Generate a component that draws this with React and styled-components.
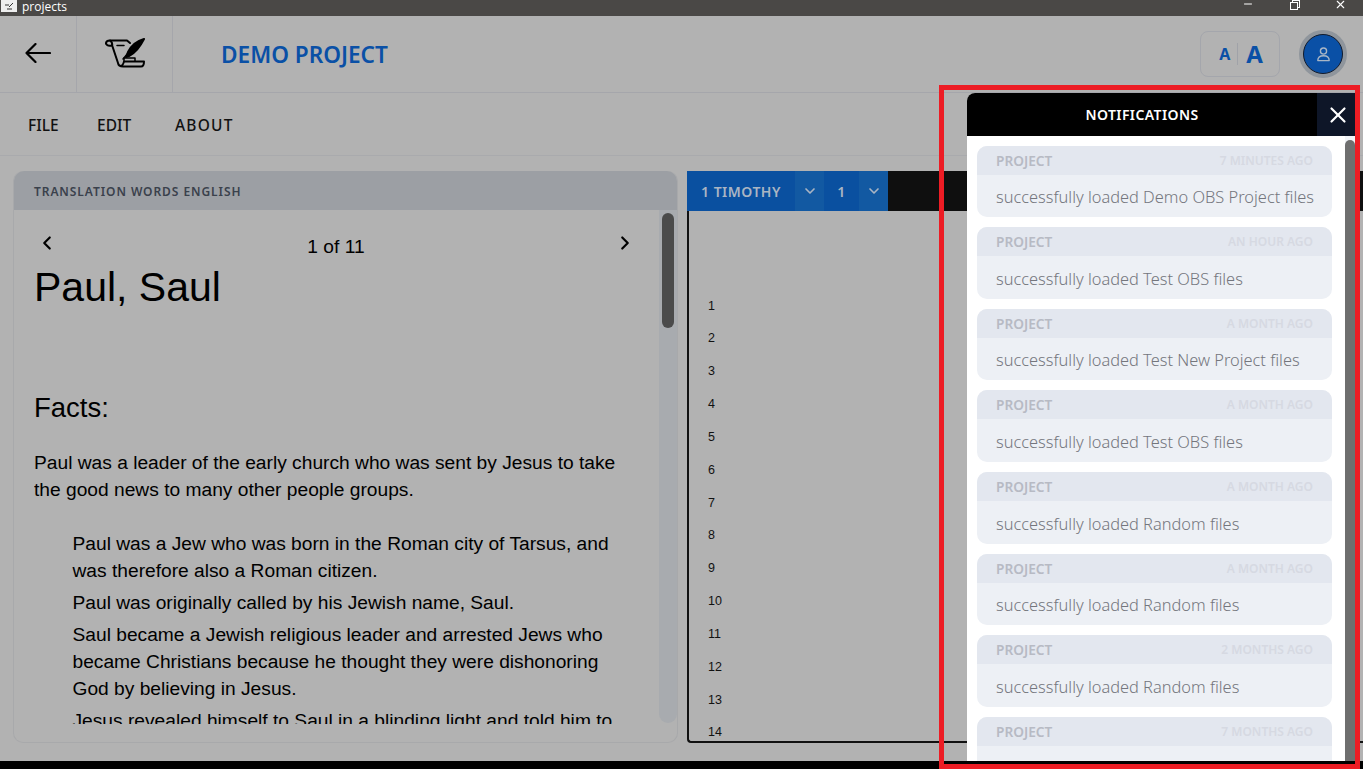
import React from "react";
import styled, { createGlobalStyle } from "styled-components";
import { ChevronDown, ChevronLeft, ChevronRight, Minus, X } from "lucide-react";

const GlobalStyle = createGlobalStyle`
  * { box-sizing: border-box; }
  html, body { margin: 0; padding: 0; overflow: hidden; background: #000; }
`;

const Page = styled.div`
  position: relative;
  width: 1363px;
  height: 769px;
  overflow: hidden;
  display: flex;
  flex-direction: column;
  font-family: "Noto Sans", sans-serif;
  background: #000;
`;

const TitleBar = styled.div`
  height: 16px;
  flex: none;
  display: flex;
  align-items: center;
  background: #4a4846;
  color: #fff;
  font-size: 12px;
`;
const AppIcon = styled.div`
  width: 16px;
  height: 12px;
  margin: -4px 5px 0 1px;
  display: flex;
  align-items: center;
  justify-content: center;
  background: #eee;
`;
const TitleText = styled.span`
  flex: 1;
  margin-top: -4px;
  font-family: "Open Sans", sans-serif;
`;
const WinButton = styled.div`
  width: 46px;
  height: 16px;
  display: flex;
  align-items: center;
  justify-content: center;
  color: #fff;
`;
const RestoreIcon = styled.div`
  width: 8px;
  height: 8px;
  margin-top: -4px;
  border: 1px solid #fff;
  box-shadow: 2px -2px 0 -1px #4a4846, 2px -2px 0 0 #fff;
`;

const Shell = styled.div`
  height: 745px;
  flex: none;
  display: flex;
  flex-direction: column;
  background: #b2b2b2;
`;

const Header = styled.header`
  height: 77px;
  flex: none;
  display: flex;
  align-items: stretch;
  border-bottom: 1px solid #a5a6ab;
`;
const HeaderCell = styled.div`
  width: ${(p) => p.$w}px;
  display: flex;
  align-items: center;
  justify-content: center;
  padding-bottom: 2px;
  border-right: 1px solid #a5a6ab;
  color: #000;
`;
const ProjectName = styled.h1`
  flex: 1;
  margin: 0 0 0 48px;
  align-self: center;
  font-size: 22.6px;
  font-weight: 600;
  color: #0a50a6;
`;
const FontSizer = styled.div`
  width: 80px;
  height: 46px;
  margin-right: 23px;
  align-self: center;
  display: flex;
  align-items: center;
  justify-content: center;
  gap: 8px;
  padding-left: 2px;
  border: 1px solid #a4a6ac;
  border-radius: 8px;
  color: #0a50a6;
  font-weight: 700;
`;
const SizeA = styled.span`
  font-size: ${(p) => p.$size}px;
  line-height: 22px;
  padding-right: ${(p) => (p.$first ? 7 : 0)}px;
  border-right: ${(p) => (p.$first ? "1px solid #a0a2a8" : "none")};
`;
const Avatar = styled.div`
  width: 40px;
  height: 40px;
  margin-right: 20px;
  align-self: center;
  display: flex;
  align-items: center;
  justify-content: center;
  border-radius: 50%;
  background: #0a50a6;
  border: 1px solid #111a2b;
  box-shadow: 0 0 0 4px #8f959c;
`;

const MenuBar = styled.nav`
  height: 63px;
  flex: none;
  display: flex;
  align-items: center;
  padding: 2px 0 0 28px;
  border-bottom: 1px solid #a9aaad;
`;
const MenuItem = styled.span`
  width: ${(p) => p.$w}px;
  font-size: 15.5px;
  font-weight: 500;
  color: #111;
  letter-spacing: ${(p) => p.$track || 0}px;
`;

const Main = styled.main`
  flex: 1;
  min-height: 0;
  display: flex;
  align-items: flex-start;
  padding: 15px 0 0 13px;
  gap: 9px;
`;

const WordsCard = styled.section`
  width: 665px;
  height: 572px;
  flex: none;
  display: flex;
  flex-direction: column;
  border: 1px solid #a8a9ab;
  border-top: none;
  border-radius: 10px;
`;
const WordsTitle = styled.div`
  height: 39px;
  flex: none;
  display: flex;
  align-items: center;
  padding: 1px 0 0 20px;
  background: #9c9fa4;
  border-radius: 10px 10px 0 0;
  color: #3a414c;
  font-size: 12px;
  font-weight: 600;
  letter-spacing: 0.92px;
`;
const WordsBody = styled.div`
  flex: 1;
  min-height: 0;
  display: flex;
  padding: 0 0 18px 20px;
  gap: 15px;
`;
const Article = styled.article`
  flex: 1;
  min-width: 0;
  overflow: hidden;
  color: #000;
  font-family: "Liberation Sans", sans-serif;
  font-size: 19.2px;
  line-height: 27px;
`;
const Pager = styled.div`
  width: 602px;
  height: 33px;
  margin-top: 20px;
  display: flex;
  align-items: center;
  justify-content: space-between;
  padding-left: 2px;
`;
const PagerArrow = styled.span`
  display: flex;
  margin-bottom: 7px;
`;
const WordTitle = styled.h2`
  margin: 1px 0 0;
  font-size: 41px;
  line-height: 46px;
  font-weight: 400;
`;
const Heading = styled.h3`
  margin: 82px 0 26px;
  font-size: 27.5px;
  line-height: 31px;
  font-weight: 400;
`;
const Para = styled.p`
  width: 595px;
  margin: 0 0 27px;
`;
const BulletList = styled.div`
  width: 595px;
  padding-left: 38.5px;
  display: flex;
  flex-direction: column;
  gap: 5px;
`;
const Line = styled.div`
  margin: 0;
`;
const ScrollTrack = styled.div`
  width: 18px;
  height: 513px;
  flex: none;
  padding: 3px;
  background: #a8abaf;
  border-radius: 0 0 9px 9px;
`;
const ScrollThumb = styled.div`
  height: 115px;
  background: #4b4b4b;
  border-radius: 6px;
`;

const EditorPane = styled.section`
  flex: 1;
  height: 572px;
  display: flex;
  flex-direction: column;
  border-left: 2px solid #111;
  border-bottom: 2px solid #111;
  border-bottom-left-radius: 4px;
`;
const EditorBar = styled.div`
  height: 40px;
  flex: none;
  margin-left: -2px;
  display: flex;
  background: #0f0f0f;
  color: #aab5c3;
  font-size: 14px;
  font-weight: 600;
  letter-spacing: 0.5px;
`;
const BarLabel = styled.div`
  width: ${(p) => p.$w}px;
  display: flex;
  align-items: center;
  justify-content: ${(p) => (p.$center ? "center" : "flex-start")};
  padding-left: ${(p) => (p.$center ? 0 : 14)}px;
  background: #0a50a0;
`;
const BarChevron = styled.div`
  width: 29px;
  display: flex;
  align-items: center;
  justify-content: center;
  background: #1259a2;
`;
const VerseList = styled.div`
  flex: 1;
  min-height: 0;
  overflow: hidden;
  padding: 78.5px 0 0 19px;
  font-family: "Liberation Sans", sans-serif;
  font-size: 12.5px;
  color: #111;
`;
const Verse = styled.div`
  height: 32.85px;
  line-height: 32.85px;
`;

const Panel = styled.aside`
  position: absolute;
  left: 967px;
  top: 93px;
  width: 388px;
  height: 668px;
  display: flex;
  flex-direction: column;
  background: #fff;
  border-radius: 8px 0 0 0;
  overflow: hidden;
`;
const PanelHead = styled.div`
  height: 43px;
  flex: none;
  display: flex;
  background: #000;
  color: #fff;
`;
const PanelTitle = styled.div`
  flex: 1;
  display: flex;
  align-items: center;
  justify-content: center;
  font-size: 14px;
  font-weight: 600;
  letter-spacing: 0.4px;
`;
const PanelClose = styled.div`
  width: 38px;
  display: flex;
  align-items: center;
  justify-content: center;
  padding-left: 4px;
  background: #0e1628;
`;
const PanelBody = styled.div`
  flex: 1;
  min-height: 0;
  display: flex;
`;
const CardList = styled.div`
  flex: 1;
  min-width: 0;
  overflow: hidden;
  padding: 9.6px 13px 0 10px;
  display: flex;
  flex-direction: column;
  gap: 10px;
`;
const Card = styled.div`
  height: 71.6px;
  flex: none;
  background: #edf0f5;
  border-radius: 10px;
  overflow: hidden;
`;
const CardTop = styled.div`
  height: 29px;
  display: flex;
  align-items: center;
  justify-content: space-between;
  padding: 0 19px;
  background: #e3e7ef;
  font-weight: 600;
`;
const Kind = styled.span`
  font-size: 13.7px;
  color: #b7bac4;
`;
const When = styled.span`
  font-size: 12px;
  color: #d6d9e2;
`;
const CardText = styled.div`
  height: 42.6px;
  display: flex;
  align-items: center;
  padding: 1.5px 19px 0;
  color: #74767d;
  font-size: 16.4px;
  font-weight: 300;
  white-space: nowrap;
`;
const PanelTrack = styled.div`
  width: 10px;
  flex: none;
  padding-top: 4px;
  background: #f1f4f8;
`;
const PanelThumb = styled.div`
  height: 100%;
  background: #6f6f6f;
  border-radius: 5px 5px 0 0;
`;

const Highlight = styled.div`
  position: absolute;
  left: 939px;
  top: 85px;
  width: 421px;
  height: 684px;
  border: 5px solid #ed1c24;
  pointer-events: none;
`;

const BackArrow = () => (
  <svg width="26" height="20" viewBox="0 0 26 20" fill="none" stroke="#000" strokeWidth="2.2" strokeLinecap="round" strokeLinejoin="round">
    <path d="M25 10H1.5M10.5 1L1.5 10L10.5 19" />
  </svg>
);

const LogoIcon = () => (
  <svg width="40" height="30" viewBox="0 0 40 30" fill="none" stroke="#000" strokeWidth="2" strokeLinecap="round" strokeLinejoin="round">
    <path d="M1 5.5 C1 3 3 2.5 5 2.5 H22 L25 5" />
    <path d="M1 5.5 C2 8 5 8 7 7.5 C7.5 6 7 4 5 2.5" />
    <path d="M7 7 L13 25 C13.5 28 16 28.5 18 28.5 H36 C38 28.5 39 26.5 39 23.5 H19 C18.5 25 18.5 27 16 28" />
    <path d="M12 7.5 H19" strokeWidth="1.5" />
    <path d="M19 23 V20 H30 V23" strokeWidth="1.5" />
    <path d="M39 1 C32 3 26 8 23 14 L21 19 L24 18 C30 15 35 9 39 1 Z" fill="#000" />
    <path d="M18 21 L24 14" strokeWidth="1.5" />
  </svg>
);

const TinyLogo = () => (
  <svg width="9" height="7" viewBox="0 0 9 7" fill="none" stroke="#333" strokeWidth="1">
    <path d="M0 2H4M2 6H7M8 0L4 4" />
  </svg>
);

const UserIcon = () => (
  <svg width="13" height="15" viewBox="0 0 16 18" fill="none" stroke="#a9b6c6" strokeWidth="1.7">
    <circle cx="8" cy="4.8" r="3.8" />
    <path d="M1 16.5 C1 12.5 3.5 10.5 8 10.5 C12.5 10.5 15 12.5 15 16.5 Z" strokeLinejoin="round" />
  </svg>
);

const notifications = [
  ["7 MINUTES AGO", "successfully loaded Demo OBS Project files"],
  ["AN HOUR AGO", "successfully loaded Test OBS files"],
  ["A MONTH AGO", "successfully loaded Test New Project files"],
  ["A MONTH AGO", "successfully loaded Test OBS files"],
  ["A MONTH AGO", "successfully loaded Random files"],
  ["A MONTH AGO", "successfully loaded Random files"],
  ["2 MONTHS AGO", "successfully loaded Random files"],
  ["7 MONTHS AGO", ""],
];

const verses = Array.from({ length: 14 }, (_, i) => i + 1);

export default function App() {
  return (
    <Page>
      <GlobalStyle />
      <TitleBar>
        <AppIcon>
          <TinyLogo />
        </AppIcon>
        <TitleText>projects</TitleText>
        <WinButton>
          <Minus size={12} style={{ marginTop: -8 }} />
        </WinButton>
        <WinButton>
          <RestoreIcon />
        </WinButton>
        <WinButton>
          <X size={13} style={{ marginTop: -8 }} />
        </WinButton>
      </TitleBar>
      <Shell>
        <Header>
          <HeaderCell $w={77}>
            <BackArrow />
          </HeaderCell>
          <HeaderCell $w={96}>
            <LogoIcon />
          </HeaderCell>
          <ProjectName>DEMO PROJECT</ProjectName>
          <FontSizer>
            <SizeA $size={16} $first>A</SizeA>
            <SizeA $size={24}>A</SizeA>
          </FontSizer>
          <Avatar>
            <UserIcon />
          </Avatar>
        </Header>
        <MenuBar>
          <MenuItem $w={69}>FILE</MenuItem>
          <MenuItem $w={78}>EDIT</MenuItem>
          <MenuItem $w={80} $track={1.2}>ABOUT</MenuItem>
        </MenuBar>
        <Main>
          <WordsCard>
            <WordsTitle>TRANSLATION WORDS ENGLISH</WordsTitle>
            <WordsBody>
              <Article>
                <Pager>
                  <PagerArrow>
                    <ChevronLeft size={22} strokeWidth={2.4} />
                  </PagerArrow>
                  <span>1 of 11</span>
                  <PagerArrow>
                    <ChevronRight size={22} strokeWidth={2.4} />
                  </PagerArrow>
                </Pager>
                <WordTitle>Paul, Saul</WordTitle>
                <Heading>Facts:</Heading>
                <Para>
                  Paul was a leader of the early church who was sent by Jesus to take
                  the good news to many other people groups.
                </Para>
                <BulletList>
                  <Line>
                    Paul was a Jew who was born in the Roman city of Tarsus, and was
                    therefore also a Roman citizen.
                  </Line>
                  <Line>Paul was originally called by his Jewish name, Saul.</Line>
                  <Line>
                    Saul became a Jewish religious leader and arrested Jews who became
                    Christians because he thought they were dishonoring God by
                    believing in Jesus.
                  </Line>
                  <Line>
                    Jesus revealed himself to Saul in a blinding light and told him to
                  </Line>
                </BulletList>
              </Article>
              <ScrollTrack>
                <ScrollThumb />
              </ScrollTrack>
            </WordsBody>
          </WordsCard>
          <EditorPane>
            <EditorBar>
              <BarLabel $w={108}>1 TIMOTHY</BarLabel>
              <BarChevron>
                <ChevronDown size={16} strokeWidth={2.5} />
              </BarChevron>
              <BarLabel $w={35} $center>1</BarLabel>
              <BarChevron>
                <ChevronDown size={16} strokeWidth={2.5} />
              </BarChevron>
            </EditorBar>
            <VerseList>
              {verses.map((n) => (
                <Verse key={n}>{n}</Verse>
              ))}
            </VerseList>
          </EditorPane>
        </Main>
      </Shell>
      <Panel>
        <PanelHead>
          <PanelTitle>NOTIFICATIONS</PanelTitle>
          <PanelClose>
            <X size={26} strokeWidth={2} />
          </PanelClose>
        </PanelHead>
        <PanelBody>
          <CardList>
            {notifications.map(([when, text], i) => (
              <Card key={i}>
                <CardTop>
                  <Kind>PROJECT</Kind>
                  <When>{when}</When>
                </CardTop>
                <CardText>{text}</CardText>
              </Card>
            ))}
          </CardList>
          <PanelTrack>
            <PanelThumb />
          </PanelTrack>
        </PanelBody>
      </Panel>
      <Highlight />
    </Page>
  );
}
